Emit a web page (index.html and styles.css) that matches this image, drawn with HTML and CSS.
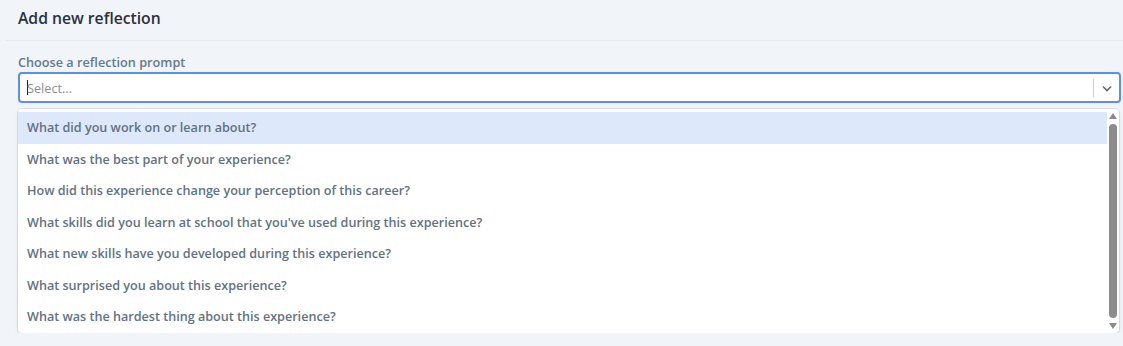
FILE: index.html
```html
<!DOCTYPE html>
<html lang="en">
<head>
    <meta charset="UTF-8">
    <title>Add new reflection</title>
    <link rel="stylesheet" href="styles.css">
</head>
<body>
    <div class="panel">
        <div class="panel-head">
            <h3>Add new reflection</h3>
        </div>
        <div class="panel-body">
            <label class="field-label">Choose a reflection prompt</label>
            <div class="select-box">
                <div class="select-value"><span class="caret"></span>Select...</div>
                <div class="select-indicators">
                    <span class="indicator-sep"></span>
                    <svg class="chevron" width="20" height="20" viewBox="0 0 20 20">
                        <path d="M6 8.5l4 4 4-4" fill="none" stroke="#666" stroke-width="1.6"/>
                    </svg>
                </div>
            </div>
            <div class="menu">
                <ul class="menu-list">
                    <li class="option focused">What did you work on or learn about?</li>
                    <li class="option">What was the best part of your experience?</li>
                    <li class="option">How did this experience change your perception of this career?</li>
                    <li class="option">What skills did you learn at school that you've used during this experience?</li>
                    <li class="option">What new skills have you developed during this experience?</li>
                    <li class="option">What surprised you about this experience?</li>
                    <li class="option">What was the hardest thing about this experience?</li>
                </ul>
                <div class="scrollbar">
                    <span class="arrow-up"></span>
                    <span class="thumb"></span>
                    <span class="arrow-down"></span>
                </div>
            </div>
        </div>
    </div>
</body>
</html>
```

FILE: styles.css
```css
body {
    margin: 0;
    background: #f1f5f9;
    font-family: 'Open Sans', sans-serif;
    overflow: hidden;
}
.panel {
    padding: 0 0 0 6px;
}
.panel-head {
    height: 36px;
    padding-bottom: 4px;
    border-bottom: 1px solid #e3e9ef;
    display: flex;
    align-items: center;
    padding-left: 12px;
}
.panel-head h3 {
    margin: 0;
    font-size: 15.7px;
    font-weight: 600;
    color: #2a323c;
}
.panel-body {
    padding: 13px 2px 0 12px;
}
.field-label {
    display: block;
    font-size: 12.7px;
    font-weight: 600;
    color: #667a8a;
    height: 18px;
    line-height: 17px;
}
.select-box {
    height: 27px;
    border: 2px solid #5c8ef0;
    border-radius: 4px;
    background: #fff;
    display: flex;
    align-items: center;
}
.select-value {
    flex: 1;
    padding-left: 7px;
    font-size: 12.7px;
    color: #8a8f96;
    display: flex;
    align-items: center;
}
.caret {
    width: 1px;
    height: 15px;
    background: #222;
    margin-right: -1px;
}
.select-indicators {
    display: flex;
    align-items: center;
    height: 100%;
}
.indicator-sep {
    width: 1px;
    height: 18px;
    background: #cfd3d8;
}
.chevron {
    margin: 0 2px 0 3px;
}
.menu {
    margin-top: 6px;
    margin-right: 2px;
    background: #fff;
    border-radius: 4px;
    box-shadow: 0 0 0 1px rgba(0, 0, 0, 0.08), 0 2px 4px rgba(0, 0, 0, 0.08);
    display: flex;
    height: 224px;
    overflow: hidden;
}
.menu-list {
    list-style: none;
    margin: 0;
    padding: 3px 0 0 0;
    flex: 1;
}
.option {
    height: 31.5px;
    line-height: 31px;
    padding-left: 9px;
    font-size: 12.6px;
    font-weight: 600;
    color: #5f7383;
}
.option.focused {
    background: #dee8fb;
}
.scrollbar {
    width: 12px;
    display: flex;
    flex-direction: column;
    align-items: center;
    padding: 4px 0;
}
.arrow-up, .arrow-down {
    width: 0;
    height: 0;
    border-left: 4px solid transparent;
    border-right: 4px solid transparent;
}
.arrow-up {
    border-bottom: 6px solid #8a8a8a;
}
.arrow-down {
    border-top: 6px solid #8a8a8a;
}
.thumb {
    flex: 1;
    width: 8px;
    margin: 5px 0;
    background: #8c8c8c;
    border-radius: 4px;
}
```
